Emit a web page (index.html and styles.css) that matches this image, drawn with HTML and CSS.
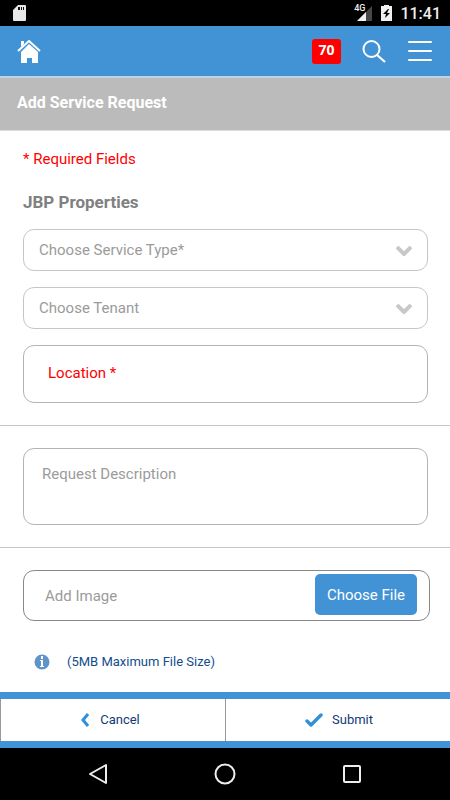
FILE: index.html
```html
<!DOCTYPE html>
<html lang="en">
<head>
<meta charset="utf-8">
<meta name="viewport" content="width=device-width, initial-scale=1">
<title>Add Service Request</title>
<link rel="stylesheet" href="styles.css">
</head>
<body>
<div class="status">
  <svg width="13" height="16" viewBox="0 0 13 16" aria-hidden="true"><path fill="#e8e8e8" d="M5 0h7q1 0 1 1v14q0 1-1 1H1q-1 0-1-1V5z"/><path fill="#111" d="M5 2h2v3H5zM8 2h1v3H8zM10 2h1v3h-1z"/></svg>
  <div class="status-right">
    <span class="network">4G</span>
    <svg class="signal" width="15" height="15" viewBox="0 0 15 15" aria-hidden="true"><path fill="#474747" d="M15 0v15H0z"/><path fill="#f0f0f0" d="M9 6v9H0z"/></svg>
    <svg class="battery" width="11" height="16" viewBox="0 0 11 16" aria-hidden="true"><path fill="#f0f0f0" d="M3 0h5v1h3v15H0V1h3z"/><path fill="#000" d="M7 4 2 9h3l-1 4 5-5H6l2-4z"/></svg>
    <span class="time">11:41</span>
  </div>
</div>
<header class="header">
  <a class="home" href="#" aria-label="Home"><svg width="24" height="23" viewBox="0 0 24 23"><path fill="#fff" d="M4 1h3v3L4 7z"/><path fill="none" stroke="#fff" stroke-width="2" d="M1 11 12 1l11 10"/><path fill="#fff" d="M12 4 21 12v11h-6v-5h-5v5H4V12z"/></svg></a>
  <a class="badge" href="#">70</a>
  <button class="icon-button search" type="button" aria-label="Search"><svg width="24" height="24" viewBox="0 0 24 24" fill="none" stroke="#fff"><circle cx="9.500" cy="10" r="8" stroke-width="2"/><path stroke-width="2.200" d="m15 16 8 7"/></svg></button>
  <button class="icon-button menu" type="button" aria-label="Menu"><svg width="24" height="22" viewBox="0 0 24 22" stroke="#fff" stroke-width="2" stroke-linecap="round"><path d="M1 2h22M1 11h22M1 20h22"/></svg></button>
</header>
<h1 class="title">Add Service Request</h1>
<form class="form">
  <section class="group">
    <p class="required">* Required Fields</p>
    <h2 class="property">JBP Properties</h2>
    <div class="select-box">
      <select class="field" aria-label="Service type"><option>Choose Service Type*</option></select>
      <svg class="chevron" width="16" height="10" viewBox="0 0 16 10" aria-hidden="true"><path fill="none" stroke="#c8c8c8" stroke-width="4" d="m1 1 7 7 7-7"/></svg>
    </div>
    <div class="select-box">
      <select class="field" aria-label="Tenant"><option>Choose Tenant</option></select>
      <svg class="chevron" width="16" height="10" viewBox="0 0 16 10" aria-hidden="true"><path fill="none" stroke="#c8c8c8" stroke-width="4" d="m1 1 7 7 7-7"/></svg>
    </div>
    <input class="field location" type="text" placeholder="Location *" aria-label="Location">
  </section>
  <section class="group description-group">
    <textarea class="field description" placeholder="Request Description" aria-label="Request description"></textarea>
  </section>
  <section class="group image-group">
    <div class="file-row">
      <input class="file-name" type="text" placeholder="Add Image" aria-label="Add image">
      <button class="choose" type="button">Choose File</button>
    </div>
    <p class="note">
      <svg width="16" height="16" viewBox="0 0 16 16" aria-hidden="true"><circle cx="8" cy="8" r="7.500" fill="#6094c8"/><path fill="#fff" d="M7 2h2v3H7zM6 6h3v6h1v1H6v-1h1V7H6z"/></svg>
      (5MB Maximum File Size)
    </p>
  </section>
  <footer class="actions">
    <button class="action cancel" type="button"><svg width="8" height="14" viewBox="0 0 8 14" aria-hidden="true"><path fill="none" stroke="#3090d8" stroke-width="3" d="M7 1 2 7l5 6"/></svg><span>Cancel</span></button>
    <button class="action submit" type="submit"><svg width="18" height="14" viewBox="0 0 18 14" aria-hidden="true"><path fill="none" stroke="#3090d8" stroke-width="3.400" stroke-linecap="round" stroke-linejoin="round" d="m2 8 4 4L16 2"/></svg><span>Submit</span></button>
  </footer>
</form>
<nav class="system-nav">
  <button class="icon-button" type="button" aria-label="Back"><svg width="20" height="22" viewBox="0 0 20 22"><path fill="none" stroke="#eee" stroke-width="2" stroke-linejoin="round" d="M18 2v18L2 11z"/></svg></button>
  <button class="icon-button" type="button" aria-label="Home screen"><svg width="22" height="22" viewBox="0 0 22 22"><circle cx="11" cy="11" r="9.500" fill="none" stroke="#eee" stroke-width="2"/></svg></button>
  <button class="icon-button" type="button" aria-label="Recent apps"><svg width="20" height="20" viewBox="0 0 20 20"><rect x="2" y="2" width="16" height="16" rx="1" fill="none" stroke="#eee" stroke-width="2"/></svg></button>
</nav>
</body>
</html>
```
FILE: styles.css
```css
* { box-sizing: border-box; }

body {
  margin: 0;
  min-height: 100vh;
  display: flex;
  flex-direction: column;
  background: #fff;
  font: 15px/20px Roboto, "Liberation Sans", sans-serif;
}

button, input, select, textarea { font: inherit; }
svg { display: block; flex: none; }

.status {
  height: 26px;
  padding: 0 9px 0 13px;
  display: flex;
  align-items: center;
  justify-content: space-between;
  background: #000;
  color: #eee;
}
.status-right { display: flex; align-items: center; }
.network { font-size: 9px; line-height: 12px; align-self: flex-start; margin-right: -8px; font-weight: 500; }
.battery { margin: 0 8px 0 9px; }
.time { padding-top: 2px; font-size: 16px; font-weight: 500; }

.header {
  height: 52px;
  padding: 0 18px 0 17px;
  display: flex;
  align-items: center;
  background: #4193d5;
  border-bottom: 2px solid #bdd3e6;
}
.home { margin-right: auto; }
.badge {
  width: 29px;
  height: 25px;
  border-radius: 3px;
  background: #f00;
  color: #fff;
  font: bold 14px/22px "Open Sans", sans-serif;
  text-align: center;
  text-decoration: none;
}
.icon-button { border: 0; padding: 0; background: none; }
.search { margin: 0 22px 0 21px; }

.title {
  margin: 0;
  padding: 14px 17px 16px;
  height: 53px;
  background: #bbb;
  border-bottom: 1px solid #ddd;
  color: #fff;
  font-size: 16px;
  line-height: 22px;
  font-weight: 700;
}

.form { flex: 1; display: flex; flex-direction: column; }
.group { padding: 0 22px 22px 23px; }
.required { margin: 0; padding-top: 18px; color: #f00; }
.property { margin: 22px 0 16px; font-size: 17px; line-height: 22px; color: #808080; }

.field {
  display: block;
  width: 100%;
  border: 1px solid #c6c6c6;
  border-radius: 11px;
  background: #fff;
  color: #9b9b9b;
  outline: 0;
}
.select-box { position: relative; margin-bottom: 16px; }
.select-box .field { height: 42px; padding: 0 40px 0 15px; appearance: none; }
.chevron { position: absolute; right: 16px; top: 17px; pointer-events: none; }

.location { height: 58px; padding: 0 24px 2px; border-color: #b4b4b4; }
.location::placeholder { color: #f00; opacity: 1; }

.description-group, .image-group { border-top: 1px solid #c6c6c6; padding-top: 22px; }
.description { height: 77px; padding: 15px 18px; border-color: #b4b4b4; resize: none; }
.description::placeholder, .file-name::placeholder { color: #9b9b9b; opacity: 1; }

.image-group { padding-right: 20px; padding-bottom: 20px; }
.file-row {
  height: 51px;
  padding: 3px 12px 5px 21px;
  display: flex;
  border: 1px solid #888;
  border-radius: 11px;
}
.file-name { flex: 1; min-width: 0; border: 0; padding: 3px 0 0; outline: 0; background: none; }
.choose { width: 102px; padding: 0; border: 0; border-radius: 5px; background: #4193d5; color: #fff; }
.note {
  margin: 31px 0 0 11px;
  display: flex;
  align-items: center;
  gap: 17px;
  font-size: 13px;
  color: #114d8e;
}

.actions {
  margin-top: auto;
  height: 56px;
  display: flex;
  border-top: 7px solid #4193d5;
  border-bottom: 7px solid #4193d5;
}
.action {
  width: 50%;
  padding: 0;
  display: flex;
  align-items: center;
  justify-content: center;
  gap: 11px;
  border: 0;
  border-left: 1px solid #999;
  background: #fff;
  color: #123a78;
  font-size: 13px;
}
.cancel { padding-right: 5px; }
.submit { gap: 9px; padding-left: 2px; }

.system-nav {
  flex: none;
  height: 52px;
  padding: 0 88px;
  display: flex;
  align-items: center;
  justify-content: space-between;
  background: #000;
}
```
